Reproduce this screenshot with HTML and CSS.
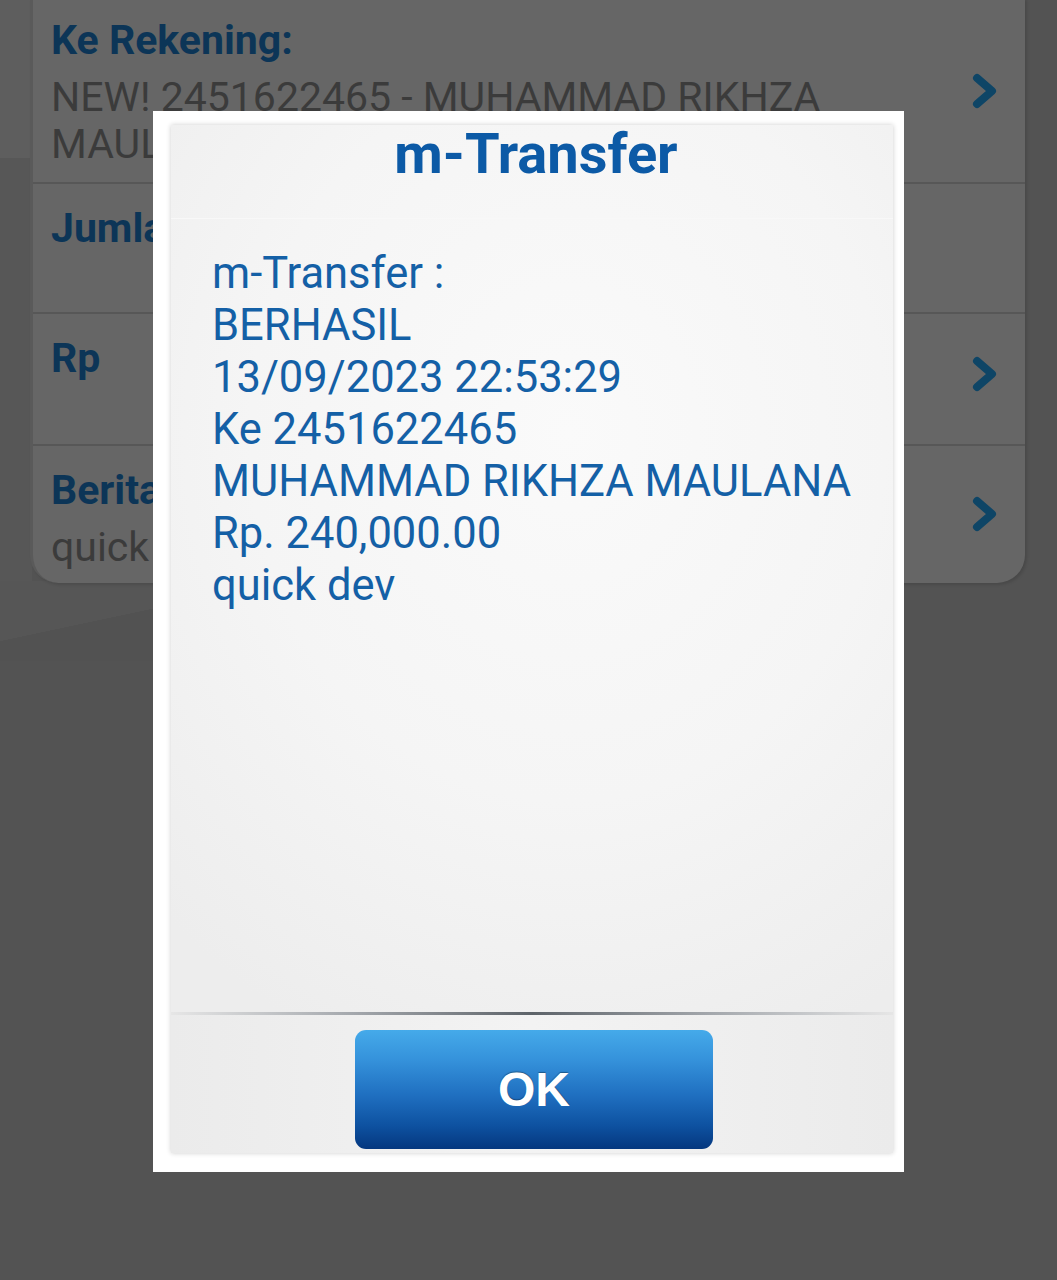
FILE: index.html
```html
<!DOCTYPE html>
<html lang="id">
<head>
<meta charset="utf-8">
<title>m-Transfer</title>
<link rel="stylesheet" href="styles.css">
</head>
<body>
<div class="screen">
  <div class="side-top"></div>
  <div class="card">
    <div class="row row-1">
      <div class="row-text">
        <div class="label">Ke Rekening:</div>
        <div class="value">NEW! 2451622465 - MUHAMMAD RIKHZA MAULANA</div>
      </div>
      <svg class="chev" viewBox="0 0 26 36" width="26" height="36"><polyline points="5,5 20,18 5,31" fill="none" stroke="#0e4566" stroke-width="8" stroke-linecap="round" stroke-linejoin="round"/></svg>
    </div>
    <div class="row row-2">
      <div class="row-text">
        <div class="label">Jumlah:</div>
      </div>
    </div>
    <div class="row row-3">
      <div class="row-text">
        <div class="label">Rp</div>
      </div>
      <svg class="chev chev-up" viewBox="0 0 26 36" width="26" height="36"><polyline points="5,5 20,18 5,31" fill="none" stroke="#0e4566" stroke-width="8" stroke-linecap="round" stroke-linejoin="round"/></svg>
    </div>
    <div class="row row-4">
      <div class="row-text">
        <div class="label">Berita:</div>
        <div class="value">quick dev</div>
      </div>
      <svg class="chev" viewBox="0 0 26 36" width="26" height="36"><polyline points="5,5 20,18 5,31" fill="none" stroke="#0e4566" stroke-width="8" stroke-linecap="round" stroke-linejoin="round"/></svg>
    </div>
  </div>

  <div class="dialog">
    <div class="panel">
      <div class="dlg-title">m-Transfer</div>
      <div class="dlg-body">
        <div class="line">m-Transfer :</div>
        <div class="line">BERHASIL</div>
        <div class="line">13/09/2023 22:53:29</div>
        <div class="line">Ke 2451622465</div>
        <div class="line">MUHAMMAD RIKHZA MAULANA</div>
        <div class="line">Rp. 240,000.00</div>
        <div class="line">quick dev</div>
      </div>
      <div class="sep"></div>
      <div class="dlg-foot">
        <div class="ok-btn">OK</div>
      </div>
    </div>
  </div>
</div>
</body>
</html>
```

FILE: styles.css
```css
html, body {
  margin: 0;
  padding: 0;
}
body {
  background: #535353;
  font-family: Roboto, "Noto Sans", sans-serif;
  width: 1057px;
  height: 1280px;
  overflow: hidden;
}
.screen {
  position: relative;
  width: 1057px;
  height: 1280px;
  background:
    linear-gradient(to right, #575757 0, #575757 32px, transparent 32px) 0 0 / 100% 583px no-repeat,
    linear-gradient(168deg, transparent 0, transparent 49%, #525252 49.2%) 0 583px / 200px 80px no-repeat,
    linear-gradient(#565656, #565656) 0 583px / 200px 80px no-repeat,
    #535353;
}
.side-top {
  position: absolute;
  left: 0;
  top: 0;
  width: 30px;
  height: 160px;
  background: #5e5e5e;
}
.card {
  position: relative;
  margin-left: 30px;
  margin-top: -2px;
  width: 995px;
  background: #666666;
  border-left: 3px solid #5a5a5a;
  border-radius: 0 0 28px 28px;
  box-sizing: border-box;
  box-shadow: 2px 2px 3px rgba(0, 0, 0, 0.12);
}
.row {
  display: flex;
  align-items: center;
  justify-content: space-between;
  box-sizing: border-box;
  padding: 21px 27px 0 18px;
}
.row-text {
  align-self: flex-start;
  flex: 1;
  min-width: 0;
}
.row-1 {
  height: 184px;
  padding-top: 19px;
}
.row-2 {
  height: 130px;
  border-top: 2px solid #575757;
}
.row-3 {
  height: 132px;
  border-top: 2px solid #575757;
}
.row-4 {
  height: 139px;
  border-top: 2px solid #575757;
}
.label {
  font-weight: 700;
  font-size: 41px;
  line-height: 47px;
  color: #0c3557;
}
.value {
  margin-top: 10px;
  font-size: 41px;
  line-height: 47px;
  color: #3b3b3b;
  padding-right: 60px;
}
.chev {
  flex: none;
  display: block;
}
.row-1 .chev { margin-top: -18px; }
.chev-up { margin-top: -32px; }
.row-4 .chev { margin-top: -22px; }

.dialog {
  position: absolute;
  left: 153px;
  top: 113px;
  width: 751px;
  height: 1061px;
  background: #ffffff;
  box-sizing: border-box;
  padding: 14px 11px 19px 18px;
}
.panel {
  height: 100%;
  display: flex;
  flex-direction: column;
  background: radial-gradient(ellipse 80% 65% at 55% 30%, #fafafa 0%, #f5f5f5 55%, #ededed 100%);
  box-shadow: 0 0 5px rgba(0, 0, 0, 0.2);
}
.dlg-title {
  height: 94px;
  box-sizing: border-box;
  text-align: center;
  font-weight: 700;
  font-size: 56px;
  line-height: 58px;
  color: #0c5aa6;
  border-bottom: 1px solid #f8f8f8;
  padding-left: 8px;
}
.dlg-body {
  flex: 1;
  padding: 29px 0 0 41px;
  color: #1460a6;
  font-size: 43.5px;
  line-height: 52px;
}
.sep {
  height: 3px;
  background: linear-gradient(to right, #e6e6e6 0%, #a4a8ad 25%, #5d6369 50%, #a4a8ad 75%, #e6e6e6 100%);
}
.dlg-foot {
  height: 138px;
  box-sizing: border-box;
  padding-top: 15px;
  display: flex;
  justify-content: center;
  background: linear-gradient(to right, #ebebeb, #f3f3f3 50%, #ebebeb);
}
.ok-btn {
  width: 358px;
  height: 119px;
  box-sizing: border-box;
  border-radius: 11px;
  background: linear-gradient(to bottom, #45aaea 0%, #3592db 25%, #1f6fc0 55%, #0e52a1 80%, #04377f 100%);
  display: flex;
  align-items: center;
  justify-content: center;
  font-family: "Liberation Sans", Arial, sans-serif;
  font-weight: 700;
  font-size: 48px;
  color: #ffffff;
  text-shadow: 0 -1px 1px rgba(0, 0, 0, 0.35);
  margin-left: 4px;
}
```
